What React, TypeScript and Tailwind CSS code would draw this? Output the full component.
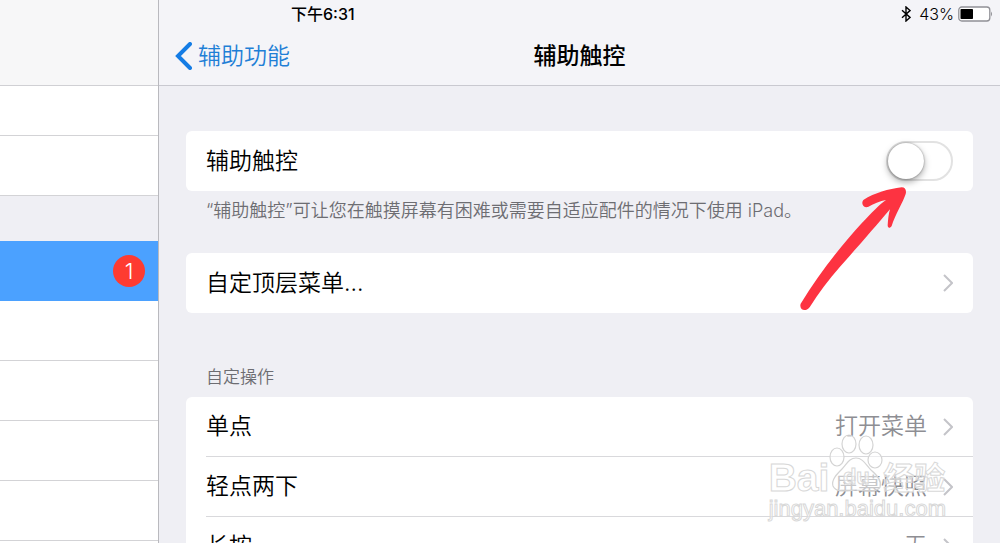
import { useState } from "react";

const actions = [
  { label: "单点", value: "打开菜单" },
  { label: "轻点两下", value: "屏幕快照" },
  { label: "长按", value: "无" },
];

function Chevron() {
  return (
    <svg viewBox="0 0 10 18" className="h-[18px] w-[10px] shrink-0" fill="none" stroke="#c4c4c9" strokeWidth="2" aria-hidden="true">
      <path d="M1 1 L9 9 L1 17" />
    </svg>
  );
}

function Sidebar() {
  return (
    <aside className="w-[159px] shrink-0 overflow-hidden border-r border-[#b9b9be] bg-white">
      <div className="h-[86px] border-b border-[#d0d0d4] bg-[#f7f7f8]" />
      <div className="h-[50px] border-b border-[#d3d3d6]" />
      <div className="h-[60px] border-b border-[#d3d3d6]" />
      <div className="h-[45px] bg-[#efeff4]" />
      <button type="button" className="flex h-[60px] w-full items-center justify-end bg-[#4ba1ff] pr-[13px]">
        <span className="flex size-8 items-center justify-center rounded-full bg-[#fe3b31] text-[22px] text-white">1</span>
      </button>
      {[0, 1, 2, 3, 4].map((row) => (
        <div key={row} className="h-[60px] border-b border-[#d3d3d6]" />
      ))}
    </aside>
  );
}

function Header() {
  return (
    <header className="h-[86px] shrink-0 border-b border-[#c9c9d0] bg-[#f4f4f8]">
      <div className="flex h-7 items-center justify-between pl-[132px] pr-[7px] text-[16px]">
        <span className="font-medium">下午6:31</span>
        <div className="flex items-center">
          <svg viewBox="0 0 10 16" className="mr-2 h-4 w-[10px]" fill="none" stroke="#000" strokeWidth="1.4" aria-hidden="true">
            <path d="M1 4.2 L9 11.4 L5 15 V1 L9 4.6 L1 11.8" />
          </svg>
          <span>43%</span>
          <svg viewBox="0 0 35 16" className="ml-1 h-4 w-[35px]" aria-hidden="true">
            <rect x="0.8" y="1" width="31" height="14" rx="3" fill="#fff" stroke="#909096" strokeWidth="1.3" />
            <rect x="2.5" y="3" width="12.5" height="10" rx="0.8" fill="#000" />
            <path d="M33 5.5 Q35 8 33 10.5 Z" fill="#909096" />
          </svg>
        </div>
      </div>
      <nav className="grid h-[56px] grid-cols-[1fr_auto_1fr] items-center px-4 text-[23px]">
        <a href="#" className="flex items-center gap-[6px] text-[#1f7fd6]">
          <svg viewBox="0 0 17 28" className="h-7 w-[17px]" fill="none" stroke="#147ce5" strokeWidth="4" strokeLinecap="round" aria-hidden="true">
            <path d="M15 2 L3 14 L15 26" />
          </svg>
          辅助功能
        </a>
        <h1 className="font-medium">辅助触控</h1>
      </nav>
    </header>
  );
}

function Arrow() {
  return (
    <svg viewBox="54 195 330 381" className="pointer-events-none absolute right-[65px] top-[54px] z-10 h-[127px] w-[110px]" fill="#fd3341" aria-hidden="true">
      <path d="M62 551 C120 455 190 370 245 310 C275 278 300 252 318 240 C300 243 280 252 264 261 C250 264 242 250 250 240 C285 218 325 207 365 202 C376 202 380 212 377 222 C370 245 345 285 335 318 C330 326 323 325 323 316 C324 300 326 280 330 268 C290 315 230 385 180 440 C145 480 115 520 90 560 C78 578 56 570 62 551 Z" />
    </svg>
  );
}

function Watermark() {
  return (
    <div className="pointer-events-none absolute bottom-[22px] right-[54px] z-10 text-white/50 [-webkit-text-stroke:1px_#d8d8d8]">
      <div className="flex items-end">
        <span className="font-['Liberation_Sans'] text-[39px] font-bold leading-[38px]">Bai</span>
        <div className="relative h-[64px] w-[54px]">
          <svg viewBox="0 0 54 64" className="h-[64px] w-[54px]" fill="#fff" fillOpacity="0.5" stroke="#d4d4d4" strokeWidth="1.2" aria-hidden="true">
            <ellipse cx="8" cy="24" rx="7" ry="9" />
            <ellipse cx="20" cy="11" rx="7" ry="9" />
            <ellipse cx="37" cy="12" rx="7" ry="9" />
            <ellipse cx="46" cy="27" rx="7" ry="8" />
            <path d="M27 25 C34 25 37 32 42 37 C49 43 53 48 51 54 C48 60 37 58 27 57 C17 58 7 60 4 53 C2 47 8 41 13 36 C18 31 20 25 27 25 Z" />
          </svg>
          <span className="absolute inset-x-0 bottom-2 text-center font-['Liberation_Sans'] text-[22px] font-bold leading-6">du</span>
        </div>
        <span className="text-[31px] font-bold leading-[38px]">经验</span>
      </div>
      <div className="text-center font-['Liberation_Sans'] text-[22px] leading-6">jingyan.baidu.com</div>
    </div>
  );
}

export default function App() {
  const [enabled, setEnabled] = useState(false);

  return (
    <div className="relative flex h-screen overflow-hidden bg-[#efeff4] font-[Inter,'Noto_Sans_CJK_SC',sans-serif] font-[350] text-black">
      <Sidebar />
      <div className="flex min-w-0 flex-1 flex-col">
        <Header />
        <main className="min-h-0 flex-1 overflow-hidden px-[27px] pt-[45px]">
          <section className="relative">
            <div className="flex h-[60px] items-center justify-between rounded-md bg-white px-5 text-[23px]">
              <label htmlFor="assistive">辅助触控</label>
              <input
                id="assistive"
                type="checkbox"
                role="switch"
                checked={enabled}
                onChange={() => setEnabled(!enabled)}
                className="h-10 w-[67px] cursor-pointer appearance-none rounded-full border-2 border-[#e2e2e2] bg-white before:block before:size-9 before:rounded-full before:bg-white before:shadow-[0_3px_7px_rgba(0,0,0,0.35),0_0_2px_rgba(0,0,0,0.4)] before:transition-transform checked:bg-[#4cd964] checked:before:translate-x-[27px]"
              />
            </div>
            <p className="whitespace-nowrap px-5 pt-2 text-[18px] leading-6 text-[#6d6d72]">
              “辅助触控”可让您在触摸屏幕有困难或需要自适应配件的情况下使用 iPad。
            </p>
            <Arrow />
          </section>

          <button type="button" className="mt-[30px] flex h-[60px] w-full items-center justify-between rounded-md bg-white px-5 text-[23px]">
            自定顶层菜单...
            <Chevron />
          </button>

          <section>
            <h2 className="px-5 pb-2 pt-[52px] text-[17px] leading-6 text-[#6d6d72]">自定操作</h2>
            <ul className="rounded-md bg-white pl-5">
              {actions.map((action) => (
                <li key={action.label} className="border-b border-[#d9d9dc] last:border-b-0">
                  <button type="button" className="flex h-[59px] w-full items-center pr-5 text-[23px]">
                    <span className="flex-1 text-left">{action.label}</span>
                    <span className="mr-4 text-[#8e8e93]">{action.value}</span>
                    <Chevron />
                  </button>
                </li>
              ))}
            </ul>
          </section>
        </main>
      </div>
      <Watermark />
    </div>
  );
}
